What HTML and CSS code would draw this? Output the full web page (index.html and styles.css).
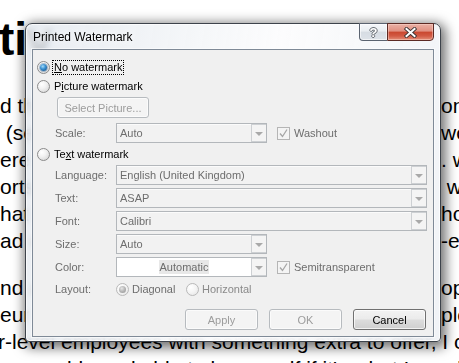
FILE: index.html
```html
<!DOCTYPE html>
<html>
<head>
<meta charset="utf-8">
<link rel="stylesheet" href="styles.css">
</head>
<body>
<div class="doc">
  <div class="heading">tiv</div>
  <div class="para">
    <div class="line"><span class="l">d the way forward for motivati</span><span class="r">on</span></div>
    <div class="line"><span class="l">&nbsp;(see how the team feels about</span><span class="r">work</span></div>
    <div class="line"><span class="l">ere is a growing need for people</span><span class="r">. we</span></div>
    <div class="line"><span class="l">orts the idea that people work</span><span class="r">&nbsp;we</span></div>
    <div class="line"><span class="l">hat they are given the space</span><span class="r">how</span></div>
    <div class="line"><span class="l">ad of being told how to be self</span><span class="r">-esteem</span></div>
  </div>
  <div class="para second">
    <div class="line"><span class="l">nd a look at the needs of the</span><span class="r">opt</span></div>
    <div class="line"><span class="l">eur and the ways that people</span><span class="r">ple</span></div>
    <div class="line full">r-level employees with something extra to offer, I co</div>
    <div class="line full">&nbsp;&nbsp;&nbsp;&nbsp;capable and able to be myself if it's what I need to be and do</div>
  </div>
</div>

<div class="window">
  <div class="titlebar">
    <span class="title">Printed Watermark</span>
    <div class="caps">
      <span class="cap help">?</span>
      <span class="cap close">
        <svg width="13" height="11" viewBox="0 0 13 11">
          <path d="M2.5 2 L10.5 9 M10.5 2 L2.5 9" stroke="#3b3333" stroke-width="3.8" stroke-linecap="square"/>
          <path d="M2.5 2 L10.5 9 M10.5 2 L2.5 9" stroke="#ffffff" stroke-width="2" stroke-linecap="square"/>
        </svg>
      </span>
    </div>
  </div>
  <div class="client">
    <div class="row r1 radio-row">
      <span class="radio checked"></span>
      <span class="lbl focus"><u>N</u>o watermark</span>
    </div>
    <div class="row r2 radio-row">
      <span class="radio"></span>
      <span class="lbl">P<u>i</u>cture watermark</span>
    </div>
    <div class="row r3">
      <span class="btn dis sel">Select Picture...</span>
    </div>
    <div class="row r4 field">
      <span class="flabel">Scale:</span>
      <div class="combo short"><span class="val">Auto</span><span class="drop"><i class="tri"></i></span></div>
      <span class="chk"><svg width="11" height="11" viewBox="0 0 11 11"><path d="M2 5.5 L4.5 8.5 L9 1.5" fill="none" stroke="#a6a6a6" stroke-width="1.3"/></svg></span>
      <span class="clabel">Washout</span>
    </div>
    <div class="row r5 radio-row">
      <span class="radio"></span>
      <span class="lbl">Te<u>x</u>t watermark</span>
    </div>
    <div class="row r6 field">
      <span class="flabel">Language:</span>
      <div class="combo long"><span class="val">English (United Kingdom)</span><span class="drop"><i class="tri"></i></span></div>
    </div>
    <div class="row r7 field">
      <span class="flabel">Text:</span>
      <div class="combo long"><span class="val">ASAP</span><span class="drop"><i class="tri"></i></span></div>
    </div>
    <div class="row r7 field">
      <span class="flabel">Font:</span>
      <div class="combo long"><span class="val">Calibri</span><span class="drop"><i class="tri"></i></span></div>
    </div>
    <div class="row r7 field">
      <span class="flabel">Size:</span>
      <div class="combo short"><span class="val">Auto</span><span class="drop"><i class="tri"></i></span></div>
    </div>
    <div class="row r7 field">
      <span class="flabel">Color:</span>
      <div class="combo short color"><span class="val"><span class="auto">Automatic</span></span><span class="drop"><i class="tri"></i></span></div>
      <span class="chk"><svg width="11" height="11" viewBox="0 0 11 11"><path d="M2 5.5 L4.5 8.5 L9 1.5" fill="none" stroke="#a6a6a6" stroke-width="1.3"/></svg></span>
      <span class="clabel">Semitransparent</span>
    </div>
    <div class="row r8 field">
      <span class="flabel">Layout:</span>
      <span class="opt diag"><span class="radio dis checked"></span><span class="olabel">Diagonal</span></span>
      <span class="opt"><span class="radio dis"></span><span class="olabel">Horizontal</span></span>
    </div>
    <div class="row r9 buttons">
      <span class="btn dis">Apply</span>
      <span class="btn dis">OK</span>
      <span class="btn on">Cancel</span>
    </div>
  </div>
</div>
</body>
</html>
```

FILE: styles.css
```css
html, body {
  margin: 0;
  padding: 0;
  width: 459px;
  height: 363px;
  overflow: hidden;
  background: #ffffff;
}

.doc {
  font-family: "Liberation Sans", Arial, sans-serif;
  color: #000;
  padding-top: 11px;
  height: 363px;
  box-sizing: border-box;
  overflow: hidden;
}

.heading {
  font-size: 46px;
  font-weight: bold;
  line-height: 56px;
  height: 56px;
  white-space: nowrap;
  margin-left: -1px;
}

.para {
  margin-top: 25px;
  font-size: 21px;
}

.para.second {
  margin-top: 20px;
}

.line {
  display: grid;
  grid-template-columns: 441px 18px;
  height: 27px;
  line-height: 27px;
  white-space: nowrap;
}

.line .l, .line .r {
  overflow: hidden;
}

.line.full {
  display: block;
  overflow: hidden;
  text-indent: -2px;
}

/* window */
.window {
  position: absolute;
  left: 25px;
  top: 23px;
  width: 416px;
  height: 319px;
  box-sizing: border-box;
  border: 1px solid #3d434b;
  border-radius: 7px 7px 4px 4px;
  background: linear-gradient(100deg, rgba(228,233,239,0.86) 0%, rgba(245,247,249,0.9) 40%, rgba(252,252,253,0.93) 55%, rgba(238,241,245,0.88) 100%);
  backdrop-filter: blur(3px);
  padding: 0 6px 4px 6px;
  display: flex;
  flex-direction: column;
  box-shadow: 2px 3px 12px 3px rgba(0,0,0,0.55), inset 0 0 0 1px rgba(255,255,255,0.7);
  font-family: "Liberation Sans", Arial, sans-serif;
  font-size: 11px;
}

.titlebar {
  height: 25px;
  flex: none;
  display: flex;
  justify-content: space-between;
  align-items: flex-start;
}

.title {
  padding: 6px 0 0 1px;
  font-size: 12px;
  color: #000;
  text-shadow: 0 0 6px rgba(255,255,255,0.9);
}

.caps {
  display: flex;
  margin-top: -1px;
}

.cap {
  height: 18px;
  box-sizing: border-box;
  display: flex;
  align-items: center;
  justify-content: center;
  border: 1px solid #5b6370;
}

.help {
  width: 28px;
  border-right: none;
  border-radius: 0 0 0 4px;
  background: linear-gradient(#f5f7fa 0%, #e9edf1 45%, #d6dce3 50%, #dde2e8 100%);
  color: #fff;
  font-weight: bold;
  font-size: 13px;
  text-shadow: 1px 0 #6a6f76, -1px 0 #6a6f76, 0 1px #6a6f76, 0 -1px #6a6f76;
  box-shadow: inset 0 0 0 1px rgba(255,255,255,0.6);
}

.close {
  width: 47px;
  border-color: #5c2a24;
  border-radius: 0 0 4px 0;
  background: linear-gradient(#eab1a5 0%, #e08f80 45%, #c9472f 50%, #d25a44 75%, #e3907a 100%);
  box-shadow: inset 0 0 0 1px rgba(255,220,210,0.45);
}

.close svg {
  display: block;
}

.client {
  flex: 1;
  border: 1px solid #7f8a97;
  background: #f0f0f0;
  display: flex;
  flex-direction: column;
  box-shadow: 0 0 0 1px rgba(255,255,255,0.55);
}

.row {
  display: flex;
  align-items: center;
  flex: none;
}

.radio-row {
  height: 18px;
  padding-left: 4px;
  gap: 2px;
}

.r1 { margin-top: 8px; }
.r2 { margin-top: 1px; }
.r3 { margin-top: 2px; height: 21px; padding-left: 24px; }
.r4 { margin-top: 5px; }
.r5 { margin-top: 2px; }
.r6 { margin-top: 2px; }
.r7 { margin-top: 3px; }
.r8 { margin-top: 2px; height: 18px; }
.r9 { margin-top: 10px; }

.field {
  height: 20px;
  padding-left: 22px;
}

.lbl {
  color: #000;
  border: 1px solid transparent;
  padding: 0 1px;
  line-height: 13px;
}

.lbl.focus {
  border: 1px dotted #000;
}

.radio {
  width: 13px;
  height: 13px;
  box-sizing: border-box;
  border-radius: 50%;
  border: 1px solid #8b8b8b;
  background: radial-gradient(circle at 35% 30%, #ffffff 0%, #f2f2f2 40%, #cfcfcf 100%);
  display: flex;
  align-items: center;
  justify-content: center;
  flex: none;
}

.radio.checked::after {
  content: "";
  width: 7px;
  height: 7px;
  border-radius: 50%;
  background: radial-gradient(circle at 40% 35%, #a5dcf8 0%, #3d93d3 40%, #1a5d98 80%, #12497c 100%);
  box-shadow: 0 0 0 1px rgba(30,80,130,0.35);
}

.radio.dis {
  border-color: #b9b9b9;
  background: radial-gradient(circle at 35% 30%, #ffffff 0%, #f4f4f4 50%, #e2e2e2 100%);
}

.radio.dis.checked::after {
  background: radial-gradient(circle at 40% 35%, #e6e6e6 0%, #b5b5b5 50%, #8f8f8f 100%);
  box-shadow: none;
}

.btn {
  height: 21px;
  box-sizing: border-box;
  display: flex;
  align-items: center;
  justify-content: center;
  border-radius: 3px;
  font-size: 11px;
}

.btn.dis {
  border: 1px solid #b7bbbf;
  background: #f4f4f4;
  color: #9c9c9c;
  box-shadow: inset 0 0 0 1px #fbfbfb;
}

.btn.sel {
  width: 92px;
}

.buttons {
  justify-content: flex-end;
  padding-right: 7px;
  gap: 11px;
}

.buttons .btn {
  width: 73px;
}

.btn.on {
  border: 1px solid #707070;
  background: linear-gradient(#f3f3f3 0%, #ebebeb 48%, #dddddd 52%, #cfcfcf 100%);
  color: #000;
  box-shadow: inset 0 0 0 1px rgba(255,255,255,0.7);
}

.flabel {
  width: 61px;
  flex: none;
  color: #6d6d6d;
}

.combo {
  height: 20px;
  box-sizing: border-box;
  border: 1px solid #b3b7bb;
  background: #f2f2f2;
  display: flex;
  flex: none;
  box-shadow: inset 0 1px 0 #fbfbfb;
}

.combo.short { width: 151px; }
.combo.long { width: 311px; }

.val {
  flex: 1;
  padding-left: 3px;
  line-height: 18px;
  color: #6d6d6d;
  white-space: nowrap;
  overflow: hidden;
}

.combo.color .val {
  background: #ffffff;
  text-align: center;
  padding-left: 0;
}

.auto {
  background: #e8e8e8;
  padding: 1px 1px;
}

.drop {
  width: 15px;
  box-sizing: border-box;
  border: 1px solid #cdd0d3;
  border-right: none;
  background: #f4f4f4;
  display: flex;
  align-items: center;
  justify-content: center;
}

.tri {
  width: 0;
  height: 0;
  border-left: 4px solid transparent;
  border-right: 4px solid transparent;
  border-top: 4px solid #a9a9a9;
  margin-top: 1px;
}

.chk {
  width: 13px;
  height: 13px;
  box-sizing: border-box;
  border: 1px solid #b5b5b5;
  background: #f4f4f4;
  margin-left: 10px;
  display: flex;
  align-items: center;
  justify-content: center;
  flex: none;
}

.chk svg { display: block; }

.clabel {
  margin-left: 4px;
  color: #6d6d6d;
}

.opt {
  display: flex;
  align-items: center;
  gap: 3px;
}

.opt.diag {
  width: 70px;
}

.olabel {
  color: #8a8a8a;
}
.diag .olabel {
  color: #6d6d6d;
}
```
